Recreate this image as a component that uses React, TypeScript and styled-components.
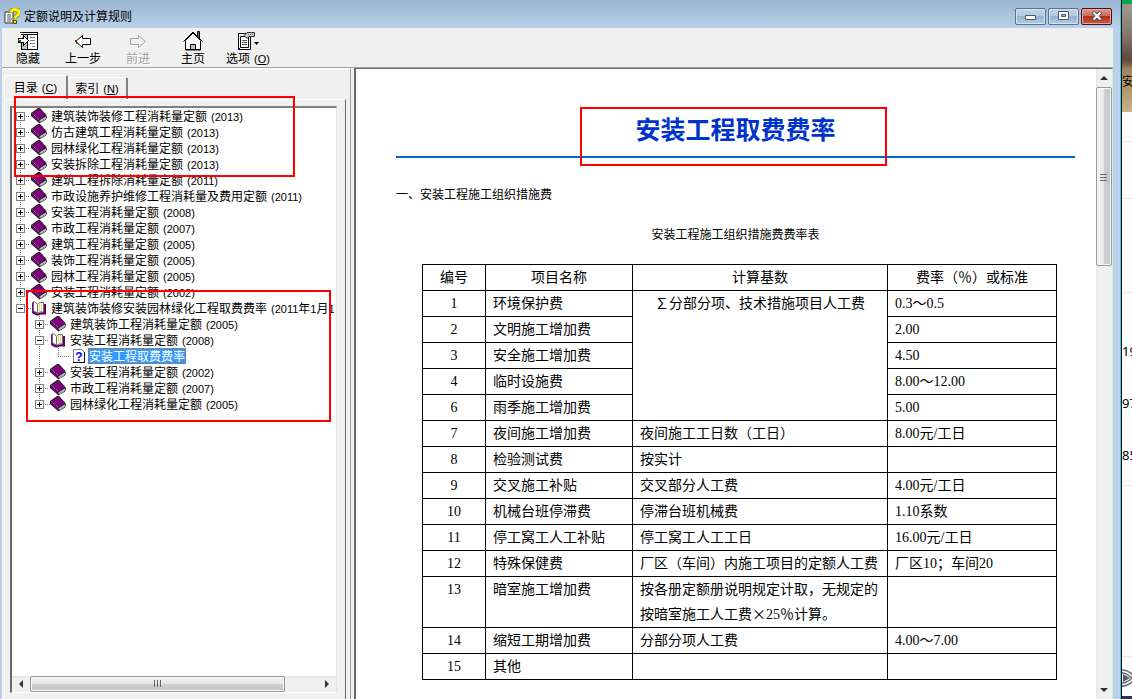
import React from "react";
import styled, { createGlobalStyle, css } from "styled-components";

const CJK = '"Noto Sans CJK SC", sans-serif';

const GlobalStyle = createGlobalStyle`
  *, *::before, *::after { box-sizing: border-box; }
  body { margin: 0; background: #fff; overflow: hidden; }
  button { font: inherit; color: inherit; padding: 0; margin: 0; border: 0; background: none; }
`;

/* ---------- window frame ---------- */

const Desktop = styled.div`
  display: flex;
  height: 100vh;
  font: 12px/16px ${CJK};
  color: #000;
`;

const Window = styled.div`
  flex: 1;
  min-width: 0;
  display: flex;
  flex-direction: column;
  background: linear-gradient(#99b4d1, #b9d1ea 28px);
  border-right: 1px solid #000;
  box-shadow: inset -1px 0 0 #2fd3f2;
`;

const TitleBar = styled.header`
  flex: 0 0 28px;
  display: flex;
  align-items: center;
  gap: 4px;
  padding: 4px 9px 0 4px;
`;

const Title = styled.h1`
  flex: 1;
  margin: 0;
  font: 12px/16px ${CJK};
`;

const Controls = styled.div`
  display: flex;
  gap: 2px;
`;

const ControlButton = styled.button<{ $close?: boolean }>`
  width: 31px;
  height: 17px;
  display: grid;
  place-items: center;
  border: 1px solid ${(p) => (p.$close ? "#4f0d14" : "#5b7190")};
  border-radius: 2px;
  box-shadow: inset 0 0 0 1px ${(p) => (p.$close ? "#e3a79c" : "#d3e1f0")};
  background: ${(p) =>
    p.$close
      ? "linear-gradient(#dc988c, #cc6a58 48%, #b5301a 50%, #cb5a42)"
      : "linear-gradient(#c0d2e6, #b3c9e1 48%, #98b3d0 50%, #b4cce5)"};
`;

const Client = styled.div`
  flex: 1;
  min-height: 0;
  display: flex;
  flex-direction: column;
  margin: 0 8px 0 2px;
  background: #f0f0f0;
`;

/* ---------- toolbar ---------- */

const Toolbar = styled.div`
  flex: 0 0 40px;
  display: flex;
  gap: 3px;
  border-bottom: 1px solid #a0a0a0;
`;

const ToolButton = styled.button`
  width: 52px;
  display: flex;
  flex-direction: column;
  align-items: center;
  padding-top: 3px;
  line-height: 14px;
  white-space: nowrap;
  &:disabled { color: #a0a0a0; text-shadow: 1px 1px 0 #fff; }
  svg { display: block; }
`;

const Latin = styled.span`
  font-family: "Liberation Sans", sans-serif;
  font-size: 11px;
`;

const Hotkey = styled(Latin)`
  padding-left: 4px;
`;

/* ---------- navigation pane ---------- */

const Main = styled.main`
  flex: 1;
  min-height: 0;
  display: flex;
`;

const NavPane = styled.nav`
  position: relative;
  flex: 0 0 349px;
  min-width: 0;
  display: flex;
  flex-direction: column;
  padding: 7px 4px 0 2px;
  border-right: 1px solid #a0a0a0;
  border-top: 1px solid #fff;
`;

const Tabs = styled.div`
  display: flex;
  align-items: flex-end;
  height: 23px;
`;

const Tab = styled.button<{ $active?: boolean }>`
  width: ${(p) => (p.$active ? "64px" : "60px")};
  height: ${(p) => (p.$active ? "24px" : "22px")};
  border-top: 1px solid #fff;
  border-left: ${(p) => (p.$active ? "1px solid #fff" : "0")};
  border-right: 2px solid #808080;
  border-radius: 2px 2px 0 0;
  line-height: 20px;
  white-space: nowrap;
`;

const TabPanel = styled.div`
  flex: 1;
  min-height: 0;
  padding: 6px 8px 6px 5px;
  border: 1px solid #fff;
  border-top-color: #fafafa;
  border-bottom: 0;
  border-right: 1px solid #696969;
`;

const TreeBox = styled.div`
  height: 100%;
  display: flex;
  flex-direction: column;
  border: 2px solid #696969;
  border-top-color: #808080;
  border-right: 1px solid #e3e3e3;
  border-bottom: 1px solid #fff;
  background: #fff;
`;

const Tree = styled.div`
  flex: 1;
  min-height: 0;
  overflow: hidden;
`;

const TreeRow = styled.div`
  display: flex;
  align-items: center;
  height: 16px;
  white-space: nowrap;
`;

type GuideKind = "blank" | "first" | "tee" | "line" | "end";

const dots = (dir: string) => `repeating-linear-gradient(${dir}, #808080 0 1px, transparent 1px 2px)`;

const guideStyles = {
  blank: css``,
  line: css`background: ${dots("to bottom")} 8px 0 / 1px 16px no-repeat;`,
  first: css`
    background: ${dots("to bottom")} 8px 8px / 1px 8px no-repeat,
      ${dots("to right")} 8px 8px / 10px 1px no-repeat;
  `,
  tee: css`
    background: ${dots("to bottom")} 8px 0 / 1px 16px no-repeat,
      ${dots("to right")} 8px 8px / 10px 1px no-repeat;
  `,
  end: css`
    background: ${dots("to bottom")} 8px 0 / 1px 8px no-repeat,
      ${dots("to right")} 8px 8px / 11px 1px no-repeat;
  `,
};

const Guide = styled.span<{ $kind: GuideKind }>`
  flex: 0 0 19px;
  height: 16px;
  padding: 4px;
  ${(p) => guideStyles[p.$kind]}
`;

const Expander = styled.button`
  display: block;
  width: 9px;
  height: 9px;
  border: 1px solid #808080;
  background: #fff;
  svg { display: block; }
`;

const NodeIcon = styled.span`
  flex: 0 0 19px;
  svg { display: block; }
`;

const NodeLabel = styled.span<{ $selected?: boolean }>`
  padding: 0 1px;
  line-height: 16px;
  ${(p) =>
    p.$selected &&
    css`
      color: #fff;
      background: #3399ff;
      outline: 1px dotted #cc6600;
      outline-offset: -1px;
    `}
`;

const Annotation = styled.div<{ $left: number; $top: number; $width: number; $height: number }>`
  position: absolute;
  left: ${(p) => p.$left}px;
  top: ${(p) => p.$top}px;
  width: ${(p) => p.$width}px;
  height: ${(p) => p.$height}px;
  border: 2px solid #ff0000;
  pointer-events: none;
`;

/* ---------- scroll bars ---------- */

const ScrollTrack = styled.div<{ $vertical?: boolean }>`
  flex: 0 0 16px;
  display: flex;
  flex-direction: ${(p) => (p.$vertical ? "column" : "row")};
  background: linear-gradient(${(p) => (p.$vertical ? "to right" : "to bottom")}, #e6e6e6, #f0f0f0 20%, #efefef);
`;

const ScrollArrow = styled.button`
  flex: 0 0 18px;
  display: grid;
  place-items: center;
`;

const ScrollThumb = styled.div<{ $vertical?: boolean; $share: number }>`
  flex: ${(p) => p.$share} 1 0;
  display: grid;
  place-items: center;
  border: 1px solid #979797;
  border-radius: 2px;
  box-shadow: inset 0 0 0 1px #f8f8f8;
  background: linear-gradient(
    ${(p) => (p.$vertical ? "to right" : "to bottom")},
    #f5f5f5, #e7e7e8 48%, #cfcfd2 52%, #c4c5c9
  );
`;

const ScrollRest = styled.div<{ $share: number }>`
  flex: ${(p) => p.$share} 1 0;
`;

/* ---------- document ---------- */

const DocPane = styled.section`
  flex: 1;
  min-width: 0;
  display: flex;
  margin-left: 3px;
  border-top: 1px solid #696969;
  border-left: 2px solid #696969;
  border-right: 1px solid #e3e3e3;
`;

const Doc = styled.article`
  position: relative;
  flex: 1;
  min-width: 0;
  overflow: hidden;
  padding: 40px 21px 0 40px;
  background: #fff;
`;

const DocTitle = styled.h2`
  margin: 0 0 26px;
  padding-bottom: 9px;
  border-bottom: 2px solid #0066cc;
  color: #0033cc;
  font: bold 25px/38px ${CJK};
  text-align: center;
`;

const Section = styled.p`
  margin: 0 0 20px;
  line-height: 20px;
`;

const RateTable = styled.table`
  width: calc(100% - 44px);
  margin-left: 26px;
  table-layout: fixed;
  border-collapse: collapse;
  font: 14px/25px "Liberation Serif", ${CJK};
`;

const Caption = styled.caption`
  padding: 0 8px 20px 0;
  font: 12px/20px ${CJK};
  text-align: center;
`;

const Col = styled.col<{ $width?: number }>`
  width: ${(p) => (p.$width ? `${p.$width}px` : "auto")};
`;

const cell = css`
  padding: 0 7px;
  border: 1px solid #000;
  font-weight: normal;
  vertical-align: top;
`;

const HeadCell = styled.th`
  ${cell}
  height: 26px;
  text-align: center;
`;

const Cell = styled.td<{ $center?: boolean }>`
  ${cell}
  height: 26px;
  padding-right: 0;
  padding-left: ${(p) => (p.$center ? "0" : "7px")};
  text-align: ${(p) => (p.$center ? "center" : "left")};
`;

const Wide = styled.span`
  display: inline-block;
  width: 14px;
  line-height: 20px;
  text-align: center;
  font-family: ${CJK};
`;

/* ---------- window behind ---------- */

const Behind = styled.aside`
  flex: 0 0 10px;
  display: flex;
  flex-direction: column;
  overflow: hidden;
  background: #fff;
  border-top: 4px solid #00a54f;
  border-bottom: 3px solid #2b3350;
`;

const Photo = styled.div`
  flex: 0 0 108px;
  padding-top: 69px;
  overflow: hidden;
  font-size: 12px;
  white-space: nowrap;
  background: linear-gradient(#a09a8c, #837668 30%, #5d4a3a 50%, #6a543c 54%, #9a8560 60%, #b5a070 85%, #c6b483);
`;

const BehindRow = styled.div<{ $height: number }>`
  flex: 0 0 ${(p) => p.$height}px;
  border-bottom: 1px solid #e8e8e8;
`;

const BehindNumbers = styled(BehindRow)`
  padding-top: 32px;
  font: 13px/52px "Noto Sans", sans-serif;
  white-space: nowrap;
`;

const BehindIcon = styled.div`
  padding-top: 12px;
`;

/* ---------- drawings ---------- */

const HelpIcon = () => (
  <svg width="16" height="16" viewBox="0 0 16 16" aria-hidden="true">
    <path d="M1 4h8v11H1z" fill="#fff" stroke="#333" />
    <path d="M3 7h4M3 9h4M3 11h5M3 13h4" stroke="#555" />
    <path d="M7 4.500q0-3 4-3t4 3q0 2-2 3t-2 3" fill="none" stroke="#6a6400" strokeWidth="4" />
    <path d="M7 4.500q0-3 4-3t4 3q0 2-2 3t-2 3" fill="none" stroke="#fff200" strokeWidth="3" />
    <path d="M9.500 12.500h3v3h-3z" fill="#fff200" stroke="#4a4600" />
  </svg>
);

const HideIcon = () => (
  <svg width="22" height="20" viewBox="0 0 22 20" shapeRendering="crispEdges" aria-hidden="true">
    <path d="M4 1h17v18H4z" fill="#fff" />
    <path d="M3 1.500h18M4 3.500h17M4 18.500h17M20.500 1v18M10.500 3v16M4.500 12v7" stroke="#000" />
    <path d="M5 4h5v14H5z" fill="#c0c0c0" />
    <path d="M13 6.500h5M13 9.500h5M13 12.500h5M15 15.500h3" stroke="#808080" />
    <path d="M1.500 7.500H6.500V4.500L11.500 9.500L6.500 14.500V11.500H1.500z" fill="#fff" stroke="#000" />
    <path d="M2 9h2v2H2z" fill="#008000" />
    <path d="M1 8h1v2H1zM3 1h2v1H3z" fill="#d00000" />
  </svg>
);

const BackIcon = () => (
  <svg width="20" height="20" viewBox="0 0 20 20" aria-hidden="true">
    <path d="M2.500 10.500L9.500 4.500V7.500H17.500V13.500H9.500V16.500z" fill="#fff" stroke="#000" />
    <path d="M2 9h2v2H2z" fill="#c00000" />
    <path d="M3 11h2v2H3z" fill="#008000" />
  </svg>
);

const ForwardIcon = () => (
  <svg width="20" height="20" viewBox="0 0 20 20" aria-hidden="true">
    <path d="M18.500 11.500L11.500 17.500V14.500H3.500V8.500H11.500V5.500z" fill="none" stroke="#fff" />
    <path d="M17.500 10.500L10.500 16.500V13.500H2.500V7.500H10.500V4.500z" fill="#f0f0f0" stroke="#a0a0a0" />
  </svg>
);

const HomeIcon = () => (
  <svg width="20" height="20" viewBox="0 0 20 20" aria-hidden="true">
    <path d="M14.500 7V.5h2V9" fill="#808080" stroke="#000" />
    <path d="M2.500 19V9.500L10 2L17.500 9.500V19z" fill="#fff" stroke="#000" />
    <path d="M.5 10.500L10 1L19.500 10.500" fill="none" stroke="#000" />
    <path d="M7.500 19V13.500h5V19" fill="#c0c0c0" stroke="#000" />
    <path d="M2 18.500h16" stroke="#000" />
  </svg>
);

const OptionsIcon = () => (
  <svg width="22" height="20" viewBox="0 0 22 20" aria-hidden="true">
    <path d="M1.500 2.500h12v16h-12z" fill="#fff" stroke="#000" />
    <path d="M3.500 5.500h8v11h-8z" fill="#fff" stroke="#000" />
    <path d="M5 9.500h5M5 11.500h5M5 13.500h5" stroke="#555" />
    <path d="M7 4.500L10 1.500H17.500V5.500H12L10 7.500z" fill="#c8c8c8" stroke="#333" />
    <path d="M11 3.500h6" stroke="#777" strokeDasharray="1 1" />
    <path d="M17 11h5l-2.500 3z" fill="#000" />
    <path d="M1 17h2v2H1z" fill="#0000a0" />
  </svg>
);

const ClosedBook = () => (
  <svg width="16" height="16" viewBox="0 0 16 16" aria-hidden="true">
    <path d="M7 0L9 0L15 6.500L16 9L15 11.500L8.500 15.500L0 8V5z" fill="#222" />
    <path d="M8 .7L14.800 7L8 11.500L1.300 5.500z" fill="#800080" />
    <path d="M.8 6.500L7.500 12.500V14L.8 8z" fill="#800080" />
    <path d="M8.500 12.500L15 8.500V10.800L9 14.500z" fill="#e0e0e0" />
    <path d="M9 13.500L15 10" stroke="#555" strokeDasharray="1 1" />
    <path d="M1.500 5.500L8 11.500" stroke="#e090e0" strokeDasharray="1 1" />
  </svg>
);

const OpenBook = () => (
  <svg width="16" height="16" viewBox="0 0 16 16" aria-hidden="true">
    <path d="M1 2L3 3V12L8 14L13 12V4H15V14H9L8 15L6 14L1 13z" fill="#800080" />
    <path d="M2.500 1.500V11Q5 11.500 6.500 13.500V4.500Q5 2 2.500 1.500z" fill="#fff" stroke="#707070" />
    <path d="M6.500 4.500Q8 1.500 12.500 2.500V12Q8.500 11 6.500 13.500z" fill="#fff" stroke="#707070" />
    <path d="M8.500 3.500V11M10.500 3V11" stroke="#e6d860" />
    <path d="M14 4V13.500H9.500L7.500 14.500H6L2 12.500" fill="none" stroke="#600060" strokeWidth="2" />
  </svg>
);

const TopicIcon = () => (
  <svg width="16" height="16" viewBox="0 0 16 16" aria-hidden="true">
    <path d="M4.500 1.500h8l3 3v10h-11z" fill="#fff" stroke="#808080" />
    <path d="M15.500 4V14.500H4" fill="none" stroke="#000" />
    <text x="10" y="12.500" textAnchor="middle" fontFamily="Liberation Sans, sans-serif" fontSize="12" fontWeight="bold" fill="#0000ff">?</text>
  </svg>
);

const arrows = {
  up: "M0 6L4 2L8 6z",
  down: "M0 2L4 6L8 2z",
  left: "M6 0L2 4L6 8z",
  right: "M2 0L6 4L2 8z",
};

const Arrow = ({ dir }: { dir: keyof typeof arrows }) => (
  <svg width="8" height="8" viewBox="0 0 8 8" aria-hidden="true">
    <path d={arrows[dir]} fill="#333" />
  </svg>
);

const Grip = ({ vertical }: { vertical?: boolean }) => (
  <svg width="8" height="8" viewBox="0 0 8 8" shapeRendering="crispEdges" aria-hidden="true">
    <path d={vertical ? "M0 1.500h7M0 4.500h7M0 7.500h7" : "M.5 0v7M3.500 0v7M6.500 0v7"} stroke="#666" />
  </svg>
);

/* ---------- data ---------- */

type Node = { label: string; guides: GuideKind[]; icon: "closed" | "open" | "topic" };

const root = (label: string, kind: GuideKind = "tee"): Node => ({ label, guides: [kind], icon: "closed" });
const child = (label: string, kind: GuideKind = "tee"): Node => ({ label, guides: ["blank", kind], icon: "closed" });

const nodes: Node[] = [
  root("建筑装饰装修工程消耗量定额(2013)", "first"),
  root("仿古建筑工程消耗量定额(2013)"),
  root("园林绿化工程消耗量定额(2013)"),
  root("安装拆除工程消耗量定额(2013)"),
  root("建筑工程拆除消耗量定额(2011)"),
  root("市政设施养护维修工程消耗量及费用定额(2011)"),
  root("安装工程消耗量定额(2008)"),
  root("市政工程消耗量定额(2007)"),
  root("建筑工程消耗量定额(2005)"),
  root("装饰工程消耗量定额(2005)"),
  root("园林工程消耗量定额(2005)"),
  root("安装工程消耗量定额(2002)"),
  { label: "建筑装饰装修安装园林绿化工程取费费率(2011年1月1日)", guides: ["end"], icon: "open" },
  child("建筑装饰工程消耗量定额(2005)"),
  { label: "安装工程消耗量定额(2008)", guides: ["blank", "tee"], icon: "open" },
  { label: "安装工程取费费率", guides: ["blank", "line", "end"], icon: "topic" },
  child("安装工程消耗量定额(2002)"),
  child("市政工程消耗量定额(2007)"),
  child("园林绿化工程消耗量定额(2005)", "end"),
];

const icons = { closed: <ClosedBook />, open: <OpenBook />, topic: <TopicIcon /> };

const mixed = (text: string) =>
  text
    .split(/([()0-9]+)/)
    .filter(Boolean)
    .map((part, i) => {
      if (part.startsWith("(")) return <Hotkey key={i}>{part}</Hotkey>;
      return /^[()0-9]/.test(part) ? <Latin key={i}>{part}</Latin> : part;
    });

const rows: [string, string, React.ReactNode, string][] = [
  ["1", "环境保护费", <><Wide>∑</Wide>分部分项、技术措施项目人工费</>, "0.3～0.5"],
  ["2", "文明施工增加费", null, "2.00"],
  ["3", "安全施工增加费", null, "4.50"],
  ["4", "临时设施费", null, "8.00～12.00"],
  ["6", "雨季施工增加费", null, "5.00"],
  ["7", "夜间施工增加费", "夜间施工工日数（工日）", "8.00元/工日"],
  ["8", "检验测试费", "按实计", ""],
  ["9", "交叉施工补贴", "交叉部分人工费", "4.00元/工日"],
  ["10", "机械台班停滞费", "停滞台班机械费", "1.10系数"],
  ["11", "停工窝工人工补贴", "停工窝工人工工日", "16.00元/工日"],
  ["12", "特殊保健费", "厂区（车间）内施工项目的定额人工费", "厂区10；车间20"],
  ["13", "暗室施工增加费", <>按各册定额册说明规定计取，无规定的按暗室施工人工费<Wide>×</Wide>25％计算。</>, ""],
  ["14", "缩短工期增加费", "分部分项人工费", "4.00～7.00"],
  ["15", "其他", "", ""],
];

/* ---------- page ---------- */

export default function App() {
  return (
    <Desktop lang="zh-CN">
      <GlobalStyle />
      <Window>
        <TitleBar>
          <HelpIcon />
          <Title>定额说明及计算规则</Title>
          <Controls>
            <ControlButton aria-label="最小化">
              <svg width="12" height="8" viewBox="0 0 12 8"><path d="M.5 3.500h10v4h-10z" fill="#fff" stroke="#535666" /></svg>
            </ControlButton>
            <ControlButton aria-label="最大化">
              <svg width="12" height="10" viewBox="0 0 12 10">
                <path d="M.5 .5h10v8h-10z" fill="#fff" stroke="#535666" />
                <path d="M3.500 3.500h4v2h-4z" fill="#8fb0d4" stroke="#535666" />
              </svg>
            </ControlButton>
            <ControlButton $close aria-label="关闭">
              <svg width="12" height="10" viewBox="0 0 12 10">
                <path d="M2 1L10 9M10 1L2 9" stroke="#535666" strokeWidth="4" />
                <path d="M2.500 1.500L9.500 8.500M9.500 1.500L2.500 8.500" stroke="#fff" strokeWidth="2" />
              </svg>
            </ControlButton>
          </Controls>
        </TitleBar>

        <Client>
          <Toolbar>
            <ToolButton><HideIcon />隐藏</ToolButton>
            <ToolButton><BackIcon />上一步</ToolButton>
            <ToolButton disabled><ForwardIcon />前进</ToolButton>
            <ToolButton><HomeIcon />主页</ToolButton>
            <ToolButton><OptionsIcon /><span>选项<Hotkey>(<u>O</u>)</Hotkey></span></ToolButton>
          </Toolbar>

          <Main>
            <NavPane>
              <Tabs role="tablist">
                <Tab role="tab" aria-selected="true" $active>目录<Hotkey>(<u>C</u>)</Hotkey></Tab>
                <Tab role="tab" aria-selected="false">索引<Hotkey>(<u>N</u>)</Hotkey></Tab>
              </Tabs>
              <TabPanel role="tabpanel">
                <TreeBox>
                  <Tree role="tree">
                    {nodes.map((node, i) => (
                      <TreeRow key={i} role="treeitem" aria-level={node.guides.length}>
                        {node.guides.map((kind, level) => (
                          <Guide key={level} $kind={kind}>
                            {level === node.guides.length - 1 && node.icon !== "topic" && (
                              <Expander aria-label={node.icon === "open" ? "折叠" : "展开"}>
                                <svg width="7" height="7" viewBox="0 0 7 7" shapeRendering="crispEdges">
                                  <path d={node.icon === "open" ? "M1 3.500h5" : "M1 3.500h5M3.500 1v5"} stroke="#000" />
                                </svg>
                              </Expander>
                            )}
                          </Guide>
                        ))}
                        <NodeIcon>{icons[node.icon]}</NodeIcon>
                        <NodeLabel $selected={node.icon === "topic"}>{mixed(node.label)}</NodeLabel>
                      </TreeRow>
                    ))}
                  </Tree>
                  <ScrollTrack>
                    <ScrollArrow aria-label="向左"><Arrow dir="left" /></ScrollArrow>
                    <ScrollThumb $share={255}><Grip /></ScrollThumb>
                    <ScrollRest $share={33} />
                    <ScrollArrow aria-label="向右"><Arrow dir="right" /></ScrollArrow>
                  </ScrollTrack>
                </TreeBox>
              </TabPanel>
              <Annotation $left={12} $top={27} $width={281} $height={81} />
              <Annotation $left={24} $top={221} $width={305} $height={132} />
            </NavPane>

            <DocPane>
              <Doc>
                <DocTitle>安装工程取费费率</DocTitle>
                <Section>一、安装工程施工组织措施费</Section>
                <RateTable>
                  <Caption>安装工程施工组织措施费费率表</Caption>
                  <colgroup>
                    <Col $width={63} />
                    <Col $width={147} />
                    <Col $width={255} />
                    <Col />
                  </colgroup>
                  <thead>
                    <tr>
                      <HeadCell scope="col">编号</HeadCell>
                      <HeadCell scope="col">项目名称</HeadCell>
                      <HeadCell scope="col">计算基数</HeadCell>
                      <HeadCell scope="col">费率（％）或标准</HeadCell>
                    </tr>
                  </thead>
                  <tbody>
                    {rows.map(([no, name, base, rate], i) => (
                      <tr key={no}>
                        <Cell $center>{no}</Cell>
                        <Cell>{name}</Cell>
                        {base !== null && (
                          <Cell $center={i === 0} rowSpan={i === 0 ? 5 : 1}>{base}</Cell>
                        )}
                        <Cell>{rate}</Cell>
                      </tr>
                    ))}
                  </tbody>
                </RateTable>
                <Annotation $left={224} $top={38} $width={307} $height={59} />
              </Doc>
              <ScrollTrack $vertical>
                <ScrollArrow aria-label="向上"><Arrow dir="up" /></ScrollArrow>
                <ScrollThumb $vertical $share={178}><Grip vertical /></ScrollThumb>
                <ScrollRest $share={416} />
                <ScrollArrow aria-label="向下"><Arrow dir="down" /></ScrollArrow>
              </ScrollTrack>
            </DocPane>
          </Main>
        </Client>
      </Window>

      <Behind>
        <Photo>安</Photo>
        <BehindRow $height={30} />
        <BehindRow $height={57} />
        <BehindRow $height={94} />
        <BehindNumbers $height={193}>
          <div>19</div>
          <div>97</div>
          <div>85</div>
        </BehindNumbers>
        <BehindRow $height={171} />
        <BehindIcon>
          <svg width="10" height="18" viewBox="0 0 10 18" aria-hidden="true">
            <path d="M0 1Q7 1 14 9Q7 17 0 17M0 4Q5 4 10 9Q5 14 0 14" fill="none" stroke="#666b75" strokeWidth="1.500" />
            <path d="M1 5L8 9L1 13z" fill="#555b66" />
          </svg>
        </BehindIcon>
      </Behind>
    </Desktop>
  );
}
